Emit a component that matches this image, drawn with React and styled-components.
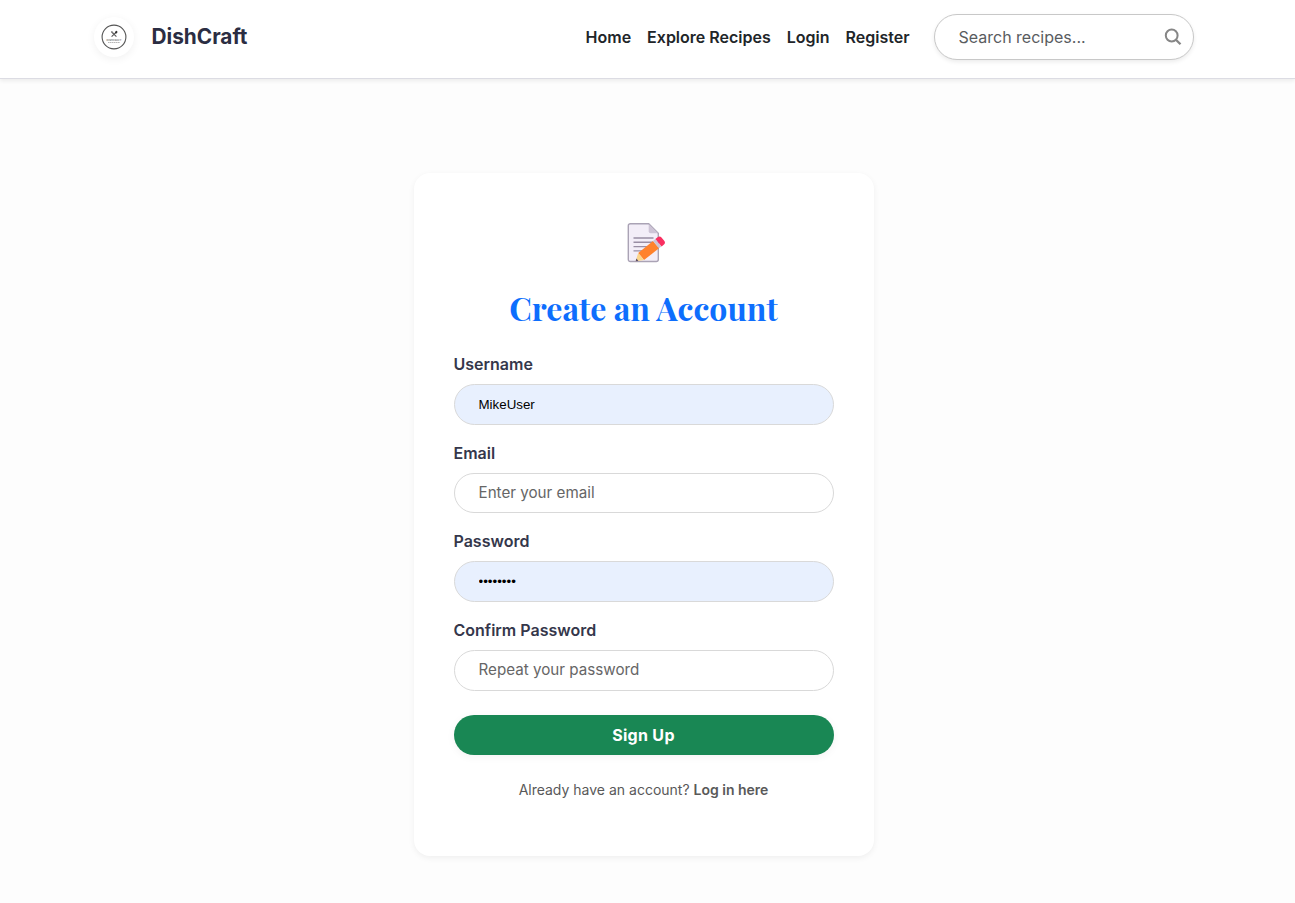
import React from "react";
import styled, { createGlobalStyle } from "styled-components";

const GlobalStyle = createGlobalStyle`
  *, *::before, *::after { box-sizing: border-box; }
  body {
    margin: 0;
    background: #fdfdfd;
    font-family: Inter, "Liberation Sans", sans-serif;
    font-size: 16px;
    line-height: 1.5;
    color: #2b2d42;
  }
`;

const Page = styled.div`
  min-height: 903px;
  overflow: hidden;
`;

const Header = styled.header`
  height: 79px;
  padding: 14px 8px 0 0;
  background: #fff;
  border-bottom: 1px solid #dcdce3;
  box-shadow: 0 2px 4px rgba(0, 0, 0, 0.07);
`;

const HeaderInner = styled.div`
  width: 1100px;
  height: 46px;
  margin: 0 auto;
  display: flex;
  align-items: center;
`;

const Brand = styled.a`
  display: flex;
  align-items: center;
  gap: 18px;
  margin-right: auto;
  color: #2b2d42;
  font-size: 20.8px;
  font-weight: 700;
  line-height: 40px;
`;

const LogoDisc = styled.span`
  display: flex;
  align-items: center;
  justify-content: center;
  width: 40px;
  height: 40px;
  border-radius: 50%;
  background: #fff;
  box-shadow: 0 2px 8px rgba(0, 0, 0, 0.06);
`;

const Nav = styled.nav`
  display: flex;
  gap: 16px;
  margin-right: 24px;
`;

const NavLink = styled.a`
  color: #212529;
  font-weight: 600;
  white-space: nowrap;
`;

const SearchBox = styled.div`
  display: flex;
  align-items: center;
  width: 260px;
  height: 46px;
  padding: 0 10.5px 0 24px;
  border: 1px solid #c8c8c8;
  border-radius: 23px;
  background: #fff;
  box-shadow: 0 2px 4px rgba(0, 0, 0, 0.08);
`;

const SearchInput = styled.input`
  flex: 1;
  min-width: 0;
  padding: 0;
  border: 0;
  outline: 0;
  background: transparent;
  font: inherit;
  &::placeholder { color: #595c5f; opacity: 1; }
`;

const Main = styled.main`
  display: flex;
  justify-content: center;
  padding: 94px 8px 0 0;
`;

const Card = styled.section`
  width: 460px;
  height: 683px;
  padding: 48px 40px 0;
  border-radius: 16px;
  background: #fff;
  box-shadow: 0 2px 6px rgba(0, 0, 0, 0.06);
`;

const Emblem = styled.div`
  display: flex;
  justify-content: center;
  height: 68px;
  padding-left: 6px;
`;

const Title = styled.h1`
  height: 63.3px;
  margin: 0;
  color: #0d6efd;
  font-family: "Playfair Display", "Liberation Serif", serif;
  font-size: 32px;
  font-weight: 700;
  line-height: 38px;
  text-align: center;
  white-space: nowrap;
`;

const Field = styled.div`
  margin-bottom: 16px;
`;

const Label = styled.label`
  display: block;
  height: 24px;
  margin-bottom: 8px;
  color: #35374b;
  font-weight: 600;
`;

const Input = styled.input`
  display: block;
  width: 100%;
  height: 40.6px;
  padding: ${(p) => (p.$filled ? "0 24px" : "0 24px 1px")};
  border: 1px solid #d9d9d9;
  border-radius: 21px;
  outline: 0;
  background: ${(p) => (p.$filled ? "#e8f0fe" : "#fff")};
  color: #000;
  font-family: ${(p) => (p.$filled ? '"Liberation Sans", sans-serif' : 'Inter, sans-serif')};
  font-size: ${(p) => (p.$filled ? "13.333px" : "15.2px")};
  &::placeholder { color: #666; opacity: 1; }
`;

const Submit = styled.button`
  display: block;
  width: 100%;
  height: 40px;
  margin-top: 24px;
  padding: 0;
  border: 0;
  border-radius: 20px;
  background: #198754;
  box-shadow: 0 2px 8px rgba(0, 0, 0, 0.05);
  color: #fff;
  font: 700 16px/40px Inter, sans-serif;
  letter-spacing: 0.3px;
`;

const Note = styled.p`
  margin: 24px 0 0;
  color: #595959;
  font-size: 14px;
  line-height: 22px;
  text-align: center;
`;

const NoteLink = styled.a`
  font-weight: 600;
`;

const LogoText = styled.text`
  font-family: Inter, sans-serif;
  font-weight: 600;
  fill: #666;
`;

const fields = [
  { id: "username", label: "Username", type: "text", value: "MikeUser" },
  { id: "email", label: "Email", type: "email", placeholder: "Enter your email" },
  { id: "password", label: "Password", type: "password", value: "password" },
  { id: "confirm", label: "Confirm Password", type: "password", placeholder: "Repeat your password" },
];

function Logo() {
  return (
    <svg width="26" height="26" viewBox="0 0 26 26" fill="none">
      <circle cx="13" cy="13" r="11.9" stroke="#555" strokeWidth="1.1" />
      <path d="M10.6 7.8 15.4 12.6M15 8.4 10.6 12.6" stroke="#555" strokeWidth="1.1" />
      <ellipse cx="15.2" cy="8.2" rx="1.1" ry="1.4" transform="rotate(42 15.2 8.2)" fill="#333" />
      <path d="m9.9 7.8 1.1-.7 1.5 1.6-1 1Z" fill="#777" />
      <LogoText x="5.6" y="16.5" fontSize="2.6" textLength="14.8" lengthAdjust="spacingAndGlyphs">DISHCRAFT</LogoText>
      <path d="M7 18.5h12" stroke="#999" strokeWidth=".7" strokeDasharray="1.5 .4" />
    </svg>
  );
}

function SearchIcon() {
  return (
    <svg width="18" height="18" viewBox="0 0 18 18" fill="none" stroke="#868686" strokeWidth="2">
      <circle cx="7.7" cy="7.5" r="5.9" />
      <path d="m11.9 11.7 4.6 4.6" strokeWidth="2.3" />
    </svg>
  );
}

function MemoIcon() {
  return (
    <svg width="39" height="42" viewBox="0 0 39 42" fill="none">
      <path d="M3.3 2.7h18.4l9.6 9.6v26.2a2 2 0 0 1-2 2h-26a2 2 0 0 1-2-2V4.7a2 2 0 0 1 2-2Z" fill="#f3eef8" stroke="#aaa3b5" strokeWidth="1.4" />
      <path d="M21.7 3v7.3a2 2 0 0 0 2 2h7.3Z" fill="#cdc4d6" />
      <path d="M6.5 17h20M6.5 21.3h20M6.5 25.6h15M6.5 29.9h10" stroke="#998ea4" strokeWidth="1.4" />
      <path d="m11.2 31.9 14.8-12 6 7.4-15 11.8Z" fill="#ff822d" />
      <path d="m11.2 31.9 5.8 7.2-8.3 1.1Z" fill="#fcd58a" />
      <path d="m9.4 37.6 2 2.4-2.7.2Z" fill="#594b65" />
      <path d="m26 19.9 2.4-1.9 6 7.4-2.4 1.9Z" fill="#cdc4d6" />
      <path d="m28.4 18 2.5-2c1.1-.9 2.7-.7 3.6.4l2.9 3.6c.9 1.1.7 2.6-.4 3.5l-2.4 1.9Z" fill="#f92f60" />
    </svg>
  );
}

export default function App() {
  return (
    <>
      <GlobalStyle />
      <Page>
        <Header>
          <HeaderInner>
            <Brand>
              <LogoDisc><Logo /></LogoDisc>
              <span>DishCraft</span>
            </Brand>
            <Nav>
              {["Home", "Explore Recipes", "Login", "Register"].map((item) => (
                <NavLink key={item}>{item}</NavLink>
              ))}
            </Nav>
            <SearchBox>
              <SearchInput placeholder="Search recipes..." aria-label="Search recipes" />
              <SearchIcon />
            </SearchBox>
          </HeaderInner>
        </Header>
        <Main>
          <Card>
            <Emblem><MemoIcon /></Emblem>
            <Title>Create an Account</Title>
            <form>
              {fields.map((f) => (
                <Field key={f.id}>
                  <Label htmlFor={f.id}>{f.label}</Label>
                  <Input
                    id={f.id}
                    type={f.type}
                    defaultValue={f.value}
                    placeholder={f.placeholder}
                    autoComplete="off"
                    $filled={Boolean(f.value)}
                  />
                </Field>
              ))}
              <Submit type="button">Sign Up</Submit>
            </form>
            <Note>Already have an account? <NoteLink>Log in here</NoteLink></Note>
          </Card>
        </Main>
      </Page>
    </>
  );
}
